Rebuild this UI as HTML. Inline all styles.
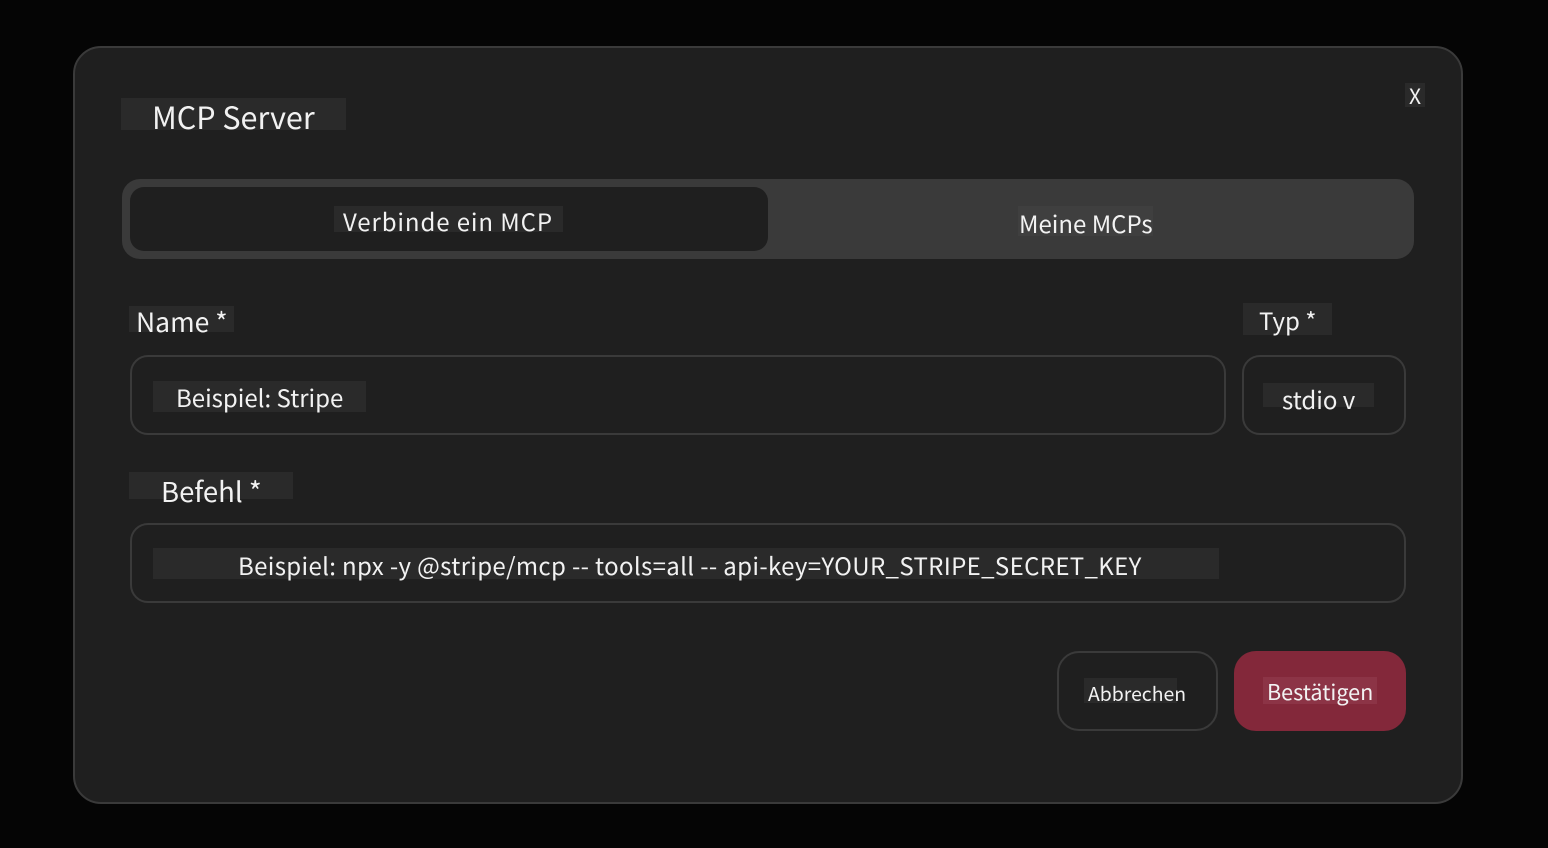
<!DOCTYPE html>
<html><head><meta charset="utf-8"><style>
*{margin:0;padding:0;box-sizing:border-box}
body{width:1548px;height:848px;background:#050505;overflow:hidden;position:relative;font-family:"Noto Sans CJK JP","Liberation Sans",sans-serif;color:#f2f2f2}
.a{position:absolute}
.hl{position:absolute;background:#2a2a2a;white-space:nowrap;line-height:1}
.modal{left:73px;top:46px;width:1390px;height:758px;background:#1f1f1f;border:2px solid #3a3a3a;border-radius:28px}
.inp{position:absolute;border:2px solid #3a3a3a;border-radius:18px}
</style></head><body>
<div class="a modal"></div>
<div class="hl" style="left:121px;top:98px;width:225px;height:32px;font-size:30.5px;padding-left:31px;overflow:hidden"><span style="position:relative;top:1px;display:block;line-height:34px">MCP Server</span></div>
<div class="hl" style="left:1405px;top:83px;width:20px;height:24px;font-size:21px;text-align:center;line-height:26px">X</div>
<div class="a" style="left:122px;top:179px;width:1292px;height:80px;background:#3a3a3a;border-radius:18px"></div>
<div class="a" style="left:130px;top:187px;width:638px;height:64px;background:#1f1f1f;border-radius:14px"></div>
<div class="hl" style="left:334px;top:206px;width:229px;height:26px;font-size:24px;letter-spacing:0.9px;padding-left:9px;line-height:30px;overflow:hidden">Verbinde ein MCP</div>
<div class="hl" style="left:1018px;top:206px;width:135px;height:30px;font-size:24px;padding-left:1px;line-height:34px;background:#3f3f3f;overflow:hidden">Meine MCPs</div>
<div class="hl" style="left:129px;top:306px;width:105px;height:26px;font-size:26.5px;padding-left:7px;line-height:30px">Name *</div>
<div class="hl" style="left:1243px;top:303px;width:89px;height:32px;font-size:24px;padding-left:16px;line-height:34px">Typ *</div>
<div class="inp" style="left:130px;top:355px;width:1096px;height:80px"></div>
<div class="hl" style="left:153px;top:381px;width:213px;height:31px;font-size:24px;padding-left:23px;line-height:32px">Beispiel: Stripe</div>
<div class="inp" style="left:1242px;top:355px;width:164px;height:80px"></div>
<div class="hl" style="left:1263px;top:383px;width:111px;height:24px;font-size:24px;padding-left:19px;line-height:31px;overflow:visible;background:linear-gradient(#2a2a2a,#2a2a2a) 0 0/100% 24px no-repeat transparent">stdio v</div>
<div class="hl" style="left:129px;top:472px;width:164px;height:27px;font-size:27.5px;padding-left:32px;line-height:36px;overflow:visible;background:linear-gradient(#2a2a2a,#2a2a2a) 0 0/100% 27px no-repeat transparent">Befehl *</div>
<div class="inp" style="left:130px;top:523px;width:1276px;height:80px"></div>
<div class="hl" style="left:153px;top:548px;width:1066px;height:31px;font-size:24px;letter-spacing:0.35px;padding-left:85px;line-height:34px;overflow:visible;background:linear-gradient(#2a2a2a,#2a2a2a) 0 0/100% 31px no-repeat transparent">Beispiel: npx -y @stripe/mcp -- tools=all -- api-key=YOUR_STRIPE_SECRET_KEY</div>
<div class="a" style="left:1057px;top:651px;width:161px;height:80px;border:2px solid #3a3a3a;border-radius:22px"></div>
<div class="hl" style="left:1084px;top:678px;width:93px;height:25px;font-size:19.4px;padding-left:4px;line-height:30px;overflow:visible">Abbrechen</div>
<div class="a" style="left:1234px;top:651px;width:172px;height:80px;background:#83283a;border-radius:22px"></div>
<div class="hl" style="left:1263px;top:677px;width:114px;height:27px;font-size:21.6px;padding-left:4px;line-height:30px;background:#8c3446;overflow:visible">Bestätigen</div>
</body></html>
